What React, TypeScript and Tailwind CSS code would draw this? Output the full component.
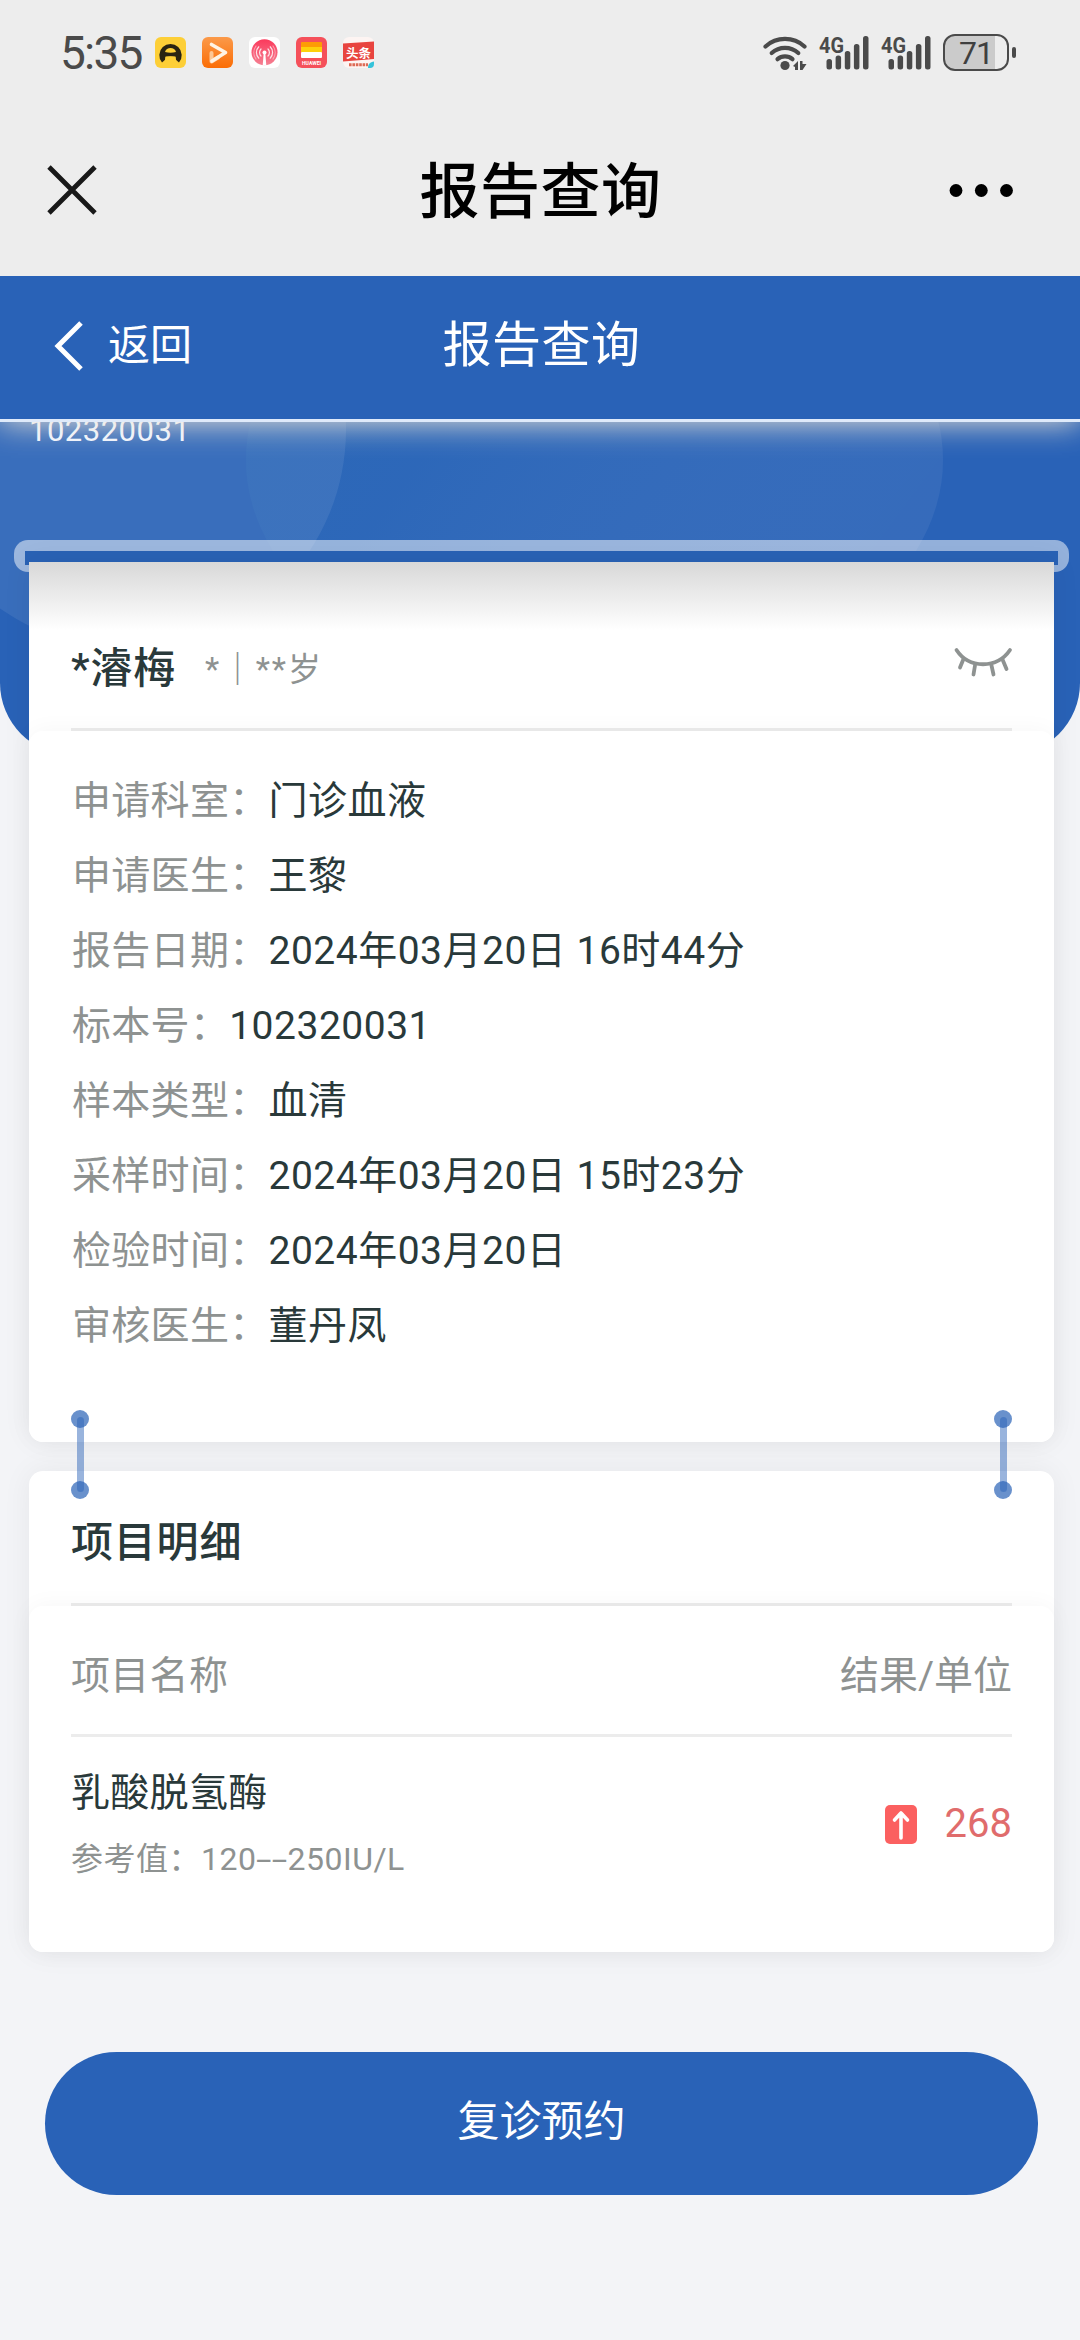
const details = [
  { label: '申请科室：', value: '门诊血液' },
  { label: '申请医生：', value: '王黎' },
  { label: '报告日期：', value: '2024年03月20日 16时44分' },
  { label: '标本号：', value: '102320031' },
  { label: '样本类型：', value: '血清' },
  { label: '采样时间：', value: '2024年03月20日 15时23分' },
  { label: '检验时间：', value: '2024年03月20日' },
  { label: '审核医生：', value: '董丹凤' },
];

function AppIcons() {
  return (
    <div className="flex gap-4">
      <svg width="31" height="31" viewBox="0 0 31 31">
        <rect width="31" height="31" rx="6" fill="#fdcf37" />
        <path d="M7 25.5A11.2 11.2 0 1 1 24 25.5L20.5 22.5V19.5H10.5V22.5Z" fill="#2a2412" />
        <path d="M10 15C11 9.5 20 9.5 21 15Q15.5 16.5 10 15Z" fill="#fdcf37" />
        <path d="M10.5 20Q15.5 18.5 20.5 20L21.5 25.5H9.5Z" fill="#fdcf37" />
      </svg>
      <svg width="31" height="31" viewBox="0 0 31 31">
        <defs>
          <linearGradient id="video" x1="0" y1="0" x2="0" y2="1">
            <stop offset="0" stopColor="#fb9a4a" />
            <stop offset="1" stopColor="#fb6d05" />
          </linearGradient>
        </defs>
        <rect width="31" height="31" rx="6" fill="url(#video)" />
        <path d="M9.5 16V24.5L16 20.5" fill="none" stroke="#fdc795" strokeWidth="4" strokeLinecap="round" strokeLinejoin="round" />
        <path d="M9.5 7.5L23.5 15.5L10 24" fill="none" stroke="#fff3e4" strokeWidth="3.6" strokeLinecap="round" strokeLinejoin="round" />
      </svg>
      <svg width="31" height="31" viewBox="0 0 31 31">
        <defs>
          <linearGradient id="radio" x1="0" y1="0" x2="0" y2="1">
            <stop offset="0" stopColor="#fb3a5c" />
            <stop offset="1" stopColor="#f58193" />
          </linearGradient>
        </defs>
        <rect width="31" height="31" rx="6" fill="#fff" />
        <circle cx="15.5" cy="15.3" r="13" fill="url(#radio)" />
        <circle cx="15.5" cy="15.5" r="2" fill="#fff" />
        <path d="M14.7 16h1.6l1 12.5h-3.6z" fill="#fff" />
        <g fill="none" stroke="#ffe3e8" strokeWidth="1.2" strokeLinecap="round">
          <path d="M12 19a5 5 0 0 1 0-7M19 19a5 5 0 0 0 0-7" />
          <path d="M9.8 21.2a8 8 0 0 1 0-11.4M21.2 21.2a8 8 0 0 0 0-11.4" />
          <path d="M7 22a11 11 0 0 1 0-13M24 22a11 11 0 0 0 0-13" strokeOpacity="0.5" />
        </g>
      </svg>
      <svg width="31" height="31" viewBox="0 0 31 31">
        <rect width="31" height="31" rx="6" fill="#f5505a" />
        <rect x="5" y="5" width="21" height="6" rx="1" fill="#fd9c05" />
        <rect x="5" y="10" width="21" height="5.5" fill="#fdd10c" />
        <rect x="5" y="15" width="21" height="6" rx="1" fill="#fff" />
        <text x="15.5" y="27.5" textAnchor="middle" textLength="19" fontSize="5" fontWeight="700" fill="#fff" fontFamily="Roboto, sans-serif">HUAWEI</text>
      </svg>
      <svg width="31" height="31" viewBox="0 0 31 31">
        <rect width="31" height="31" rx="6" fill="#fdf4f2" />
        <path d="M0 6.5L31 4.5V22L0 24.5Z" fill="#e8443f" />
        <text x="15.5" y="20.5" textAnchor="middle" fontSize="12.5" fontWeight="700" fill="#fff" fontFamily="'Noto Sans CJK SC', sans-serif">头条</text>
        <path d="M6 27.8h19" stroke="#dd6a55" strokeWidth="3" strokeDasharray="2.6 0.8" />
        <path d="M25 31c0-4 2-6 6-6.5V27a4 4 0 0 1-4 4z" fill="#34c3da" />
      </svg>
    </div>
  );
}

function Signal() {
  return (
    <svg width="55" height="40" viewBox="-4 -4 55 40" className="-ml-1 -mt-1 overflow-visible" fill="#4a4a4a">
      <text x="0" y="17.5" fontSize="22" fontWeight="700" textLength="25" lengthAdjust="spacingAndGlyphs" fontFamily="Roboto, sans-serif">4G</text>
      <rect x="7.5" y="24" width="5.5" height="10.5" rx="2.5" />
      <rect x="16.6" y="20.5" width="5.5" height="14" rx="2.5" />
      <rect x="25.8" y="16" width="5.5" height="18.5" rx="2.5" />
      <rect x="34.9" y="9" width="5.5" height="25.5" rx="2.5" />
      <rect x="44" y="1" width="5.5" height="33.5" rx="2.5" />
    </svg>
  );
}

function StatusBar() {
  return (
    <div className="flex items-center justify-between h-[105px] pl-[60px] pr-[64px]">
      <div className="flex items-center">
        <span className="w-[95px] text-[46px] leading-[46px] tracking-[-1.8px] text-[#4a4a4a]">5:35</span>
        <AppIcons />
      </div>
      <div className="flex items-center">
        <svg width="45" height="36" viewBox="0 0 45 36" className="mr-[11px]">
          <g fill="none" stroke="#4a4a4a" strokeWidth="4.2" strokeLinecap="round">
            <path d="M2.5 11.5a29 29 0 0 1 39 0" />
            <path d="M8.7 18a20 20 0 0 1 26.6 0" />
            <path d="M14.5 24.2a11.5 11.5 0 0 1 15 0" />
          </g>
          <circle cx="22" cy="30.5" r="4.6" fill="#4a4a4a" />
          <path d="M30 31l5-5v9h-3v-3zM37 26h2.500v3h4l-4 6H37z" fill="#4a4a4a" />
        </svg>
        <div className="mr-[11px]"><Signal /></div>
        <div className="mr-[11px]"><Signal /></div>
        <div className="flex items-center justify-center w-[66px] h-[37px] rounded-[12px] border-[2.5px] border-[#4a4a4a] bg-linear-to-r from-[#cbcbcb] from-80% to-[#ededed] to-80%">
          <span className="text-[32px] leading-[32px] tracking-[-1px] text-[#3f3f3f]">71</span>
        </div>
        <div className="ml-[3px] w-[4px] h-[11px] rounded-sm bg-[#4a4a4a]" />
      </div>
    </div>
  );
}

function Connector() {
  return (
    <svg width="18" height="90" viewBox="0 0 18 90" fill="#2962b7">
      <circle cx="9" cy="9" r="9" fillOpacity="0.7" />
      <circle cx="9" cy="80" r="9" fillOpacity="0.7" />
      <rect x="6" y="7" width="7" height="75" rx="3.5" fillOpacity="0.48" />
    </svg>
  );
}

export default function App() {
  return (
    <div className="flex flex-col w-[1080px] h-[2340px] overflow-hidden bg-[#f3f4f7] font-[Roboto,'Noto_Sans_CJK_SC',sans-serif] text-[#29393a]">
      <div className="relative z-20 h-[276px] shrink-0 bg-[#ededed]">
        <StatusBar />
        <div className="flex items-center justify-between h-[171px] pl-[47px] pr-[67px]">
          <svg width="50" height="50" viewBox="0 0 50 50" className="-mt-[1px]">
            <path d="M2 2L48 48M48 2L2 48" stroke="#191919" strokeWidth="4.8" />
          </svg>
          <h1 className="ml-[35px] pt-1 text-[60px] leading-[60px] tracking-[0.5px] font-medium text-black">报告查询</h1>
          <svg width="64" height="14" viewBox="0 0 64 14">
            <circle cx="7" cy="6.500" r="6.4" />
            <circle cx="32.3" cy="6.500" r="6.4" />
            <circle cx="57.5" cy="6.500" r="6.4" />
          </svg>
        </div>
      </div>

      <div className="relative z-10 grid grid-cols-3 items-center h-[146px] shrink-0 border-b-[3px] border-[#dfeafa] bg-[#2962b7] text-white shadow-[0_0_30px_#f0e6d6]">
        <div className="flex items-center gap-6 pl-[54px] pb-1">
          <svg width="30" height="50" viewBox="0 0 30 50">
            <path d="M27 2L4 25L27 48" fill="none" stroke="#fff" strokeWidth="5" />
          </svg>
          <span className="text-[42px] leading-[42px]">返回</span>
        </div>
        <span className="pl-[3px] pb-[4px] text-center text-[49px] leading-[49px] tracking-[0.5px]">报告查询</span>
      </div>

      <div className="relative h-[333px] shrink-0 overflow-hidden rounded-b-[72px] bg-[#2962b7]">
        <svg className="absolute inset-0" width="1080" height="333" viewBox="0 0 1080 333">
          <defs>
            <linearGradient id="bubble" x1="0" y1="0" x2="1" y2="0.5">
              <stop offset="0" stopColor="#3a9ab8" stopOpacity="0.1" />
              <stop offset="0.4" stopColor="#4a90c8" stopOpacity="0.12" />
              <stop offset="1" stopColor="#fff" stopOpacity="0.06" />
            </linearGradient>
          </defs>
          <ellipse cx="594.5" cy="38" rx="348.5" ry="235" fill="url(#bubble)" />
          <circle cx="127" cy="8" r="219" fill="#fff" fillOpacity="0.08" />
        </svg>
        <p className="relative -mt-[9px] pl-[29px] text-[31px] leading-[36px] tracking-[0.5px] text-[#f0f5ff]">102320031</p>
      </div>

      <div className="relative -mt-[215px] ml-[14px] w-[1055px] h-[32px] shrink-0 rounded-[14px] bg-white/50 pt-[11px] pl-[11px]">
        <div className="w-[1033px] h-[14px] bg-[#2962b5]" />
      </div>

      <div className="relative -mt-[10px] ml-[29px] w-[1025px] h-[880px] shrink-0 rounded-b-[14px] bg-white shadow-[0_0_30px_rgba(0,0,0,0.06)]">
        <div className="h-[169px] px-[42px] bg-linear-to-b from-[#d8d8d8] to-white to-[68px]">
          <div className="flex items-center justify-between h-full pt-[40px] border-b-[3px] border-[#ececec]">
            <div className="flex items-center pt-[7px] text-[33px] leading-[42px] text-[#8e9291]">
              <span className="text-[42px] tracking-[0.8px] font-medium text-[#29393a]">*濬梅</span>
              <span className="ml-[29px] pt-[2px] tracking-[1.8px]">*<span className="font-bold">｜</span>**岁</span>
            </div>
            <svg width="60" height="34" viewBox="0 0 60 34" className="-mr-[1px] -mt-1" fill="none" stroke="#8e9291" strokeWidth="3.8" strokeLinecap="round">
              <path d="M3.5 4C16 23 44 23 57 4" />
              <path d="M10.5 13L7 21.5M22 19.5L20.5 28.5M38.5 19.5L40.5 28.5M49.5 13.5L53.5 23" />
            </svg>
          </div>
        </div>
        <div className="h-[711px] rounded-[14px] bg-white px-[43px] pt-[33px] shadow-[0_0_24px_rgba(0,0,0,0.04)]">
          {details.map((item) => (
            <div key={item.label} className="flex items-center h-[75px] text-[39px] leading-[39px] tracking-[0.3px]">
              <span className="text-[#8e9291]">{item.label}</span>
              <span className="tracking-[0.5px]">{item.value}</span>
            </div>
          ))}
        </div>
      </div>

      <div className="relative z-10 flex justify-between -mt-[32px] pl-[71px] pr-[68px] h-[90px] shrink-0">
        <Connector />
        <Connector />
      </div>

      <div className="-mt-[29px] ml-[29px] w-[1025px] h-[481px] shrink-0 rounded-[14px] bg-white shadow-[0_0_30px_rgba(0,0,0,0.06)]">
        <div className="h-[135px] px-[42px]">
          <div className="flex items-center h-full pt-[11px] border-b-[3px] border-[#ececec]">
            <h2 className="text-[42px] leading-[42px] tracking-[0.8px] font-medium">项目明细</h2>
          </div>
        </div>
        <div className="h-[346px] rounded-[14px] bg-white px-[42px] shadow-[0_0_24px_rgba(0,0,0,0.04)]">
          <div className="flex items-center justify-between h-[131px] pt-[12px] border-b-[3px] border-[#ececec] text-[39px] leading-[39px] text-[#8e9291]">
            <span className="tracking-[0.3px]">项目名称</span>
            <span>结果/单位</span>
          </div>
          <div className="flex items-center justify-between h-[174px]">
            <div className="flex flex-col gap-[30px]">
              <span className="text-[39px] leading-[39px] tracking-[0.3px]">乳酸脱氢酶</span>
              <span className="text-[32px] leading-[32px] tracking-[0.5px] text-[#8e9291]">
                参考值：120<span className="inline-block origin-left scale-x-[1.75] w-[31px] tracking-[0.2px]">--</span>250IU/L
              </span>
            </div>
            <div className="flex items-center gap-[28px]">
              <svg width="32" height="39" viewBox="0 0 32 39">
                <rect width="32" height="39" rx="5" fill="#fb6060" />
                <path d="M16 33V8M9.5 15L16 8L22.5 15" fill="none" stroke="#fff" strokeWidth="3.6" strokeLinecap="round" strokeLinejoin="round" />
              </svg>
              <span className="text-[40px] leading-[40px] text-[#e06c6c]">268</span>
            </div>
          </div>
        </div>
      </div>

      <button className="mt-[100px] ml-[45px] w-[993px] h-[143px] pb-1 shrink-0 rounded-full bg-[#2962b7] text-[42px] leading-[42px] text-white">复诊预约</button>
    </div>
  );
}
